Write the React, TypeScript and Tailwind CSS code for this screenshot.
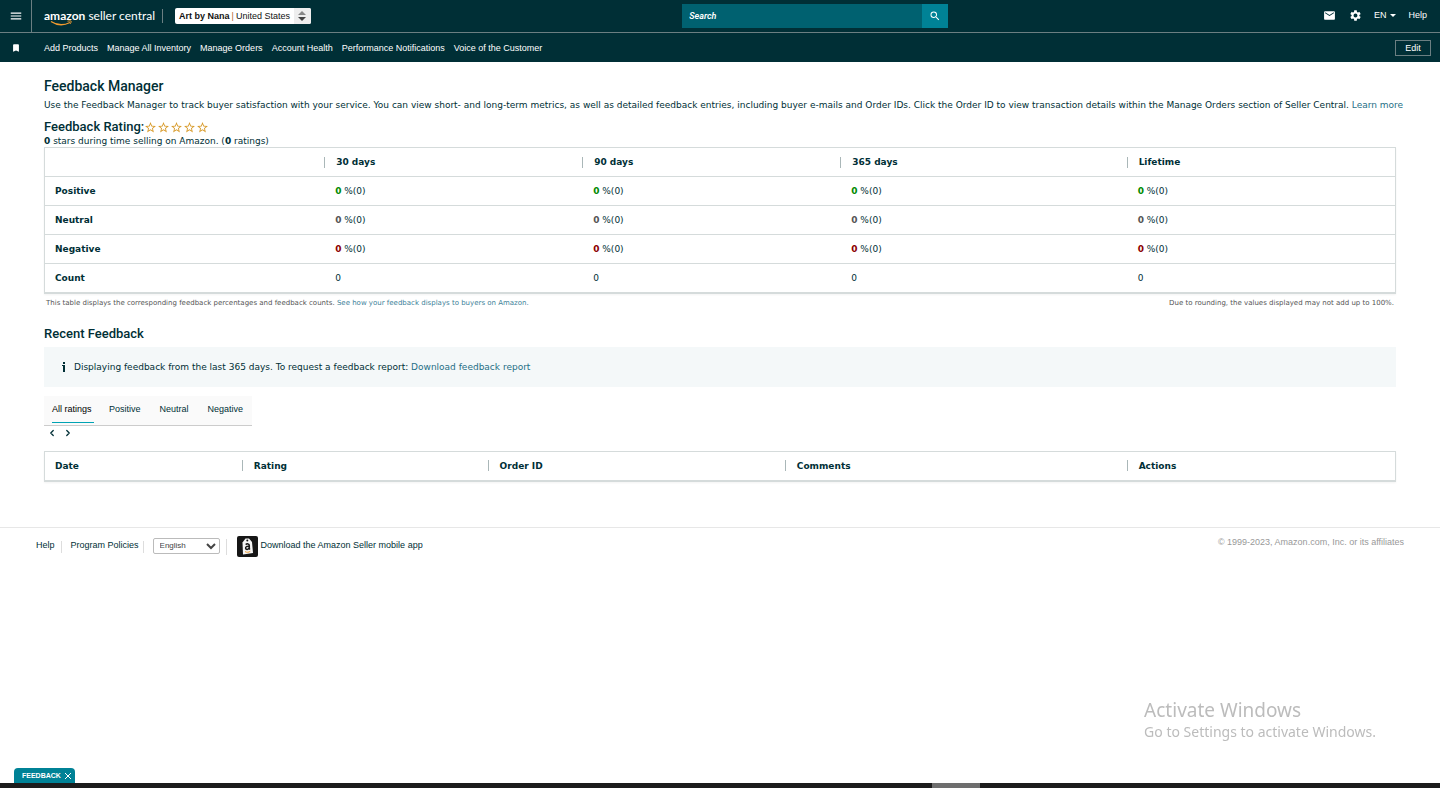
import { MdBookmark, MdMail, MdMenu, MdSearch, MdSettings, MdStarBorder } from "react-icons/md";
import { ChevronLeft, ChevronRight } from "lucide-react";

const navLinks = [
  "Add Products",
  "Manage All Inventory",
  "Manage Orders",
  "Account Health",
  "Performance Notifications",
  "Voice of the Customer",
];

const periods = [
  { label: "30 days", width: "w-[19.1%]" },
  { label: "90 days", width: "w-[19.1%]" },
  { label: "365 days", width: "w-[21.2%]" },
  { label: "Lifetime", width: "" },
];

const ratingRows = [
  { label: "Positive", color: "text-[#008a00]" },
  { label: "Neutral", color: "text-[#555555]" },
  { label: "Negative", color: "text-[#8c0000]" },
];

const entryColumns = [
  { label: "Date", width: "w-[14.6%]" },
  { label: "Rating", width: "w-[18.2%]" },
  { label: "Order ID", width: "w-[22%]" },
  { label: "Comments", width: "w-[25.3%]" },
  { label: "Actions", width: "" },
];

const tabs = ["All ratings", "Positive", "Neutral", "Negative"];

function Logo() {
  return (
    <a href="#" className="relative block whitespace-nowrap font-[Lato,sans-serif] text-xs leading-4 text-white">
      <span className="font-bold">amazon</span> <span>seller central</span>
      <svg viewBox="0 0 24 6" className="absolute top-3 left-1.5 h-1.5 w-6" fill="none" stroke="#f29b2e">
        <path d="M1 1.5C7 5.5 14 5.5 20 2.5" strokeWidth="1.3" />
        <path d="M17.5 1.2C19.5 .8 21 .8 21.2 1.2C21.4 1.8 20.8 3 20 4" strokeWidth="1" />
      </svg>
    </a>
  );
}

function TopBar() {
  return (
    <div className="flex h-8 items-center">
      <button aria-label="Menu" className="flex h-full w-8 items-center justify-center border-r border-[#6b7f82]">
        <MdMenu className="size-[14px]" />
      </button>
      <div className="flex flex-4 items-center pl-3">
        <Logo />
        <div className="ml-[7px] h-[14px] w-px bg-[#6b7f82]" />
        <button
          aria-haspopup="listbox"
          className="ml-3 flex h-4 items-center rounded-xs bg-white pl-1 text-[9px] whitespace-nowrap text-[#111111]"
        >
          <b>Art by Nana</b>
          <span className="mx-0.5 text-[#b06a30]">|</span>
          United States
          <span className="ml-1 flex h-full w-[17px] items-center justify-center rounded-r-xs bg-[#eeeeee]">
            <svg viewBox="0 0 8 10" className="h-2.5 w-2">
              <path d="M4 0L8 4H0Z" fill="#888888" />
              <path d="M4 10L8 6H0Z" fill="#444444" />
            </svg>
          </span>
        </button>
      </div>
      <form className="flex h-6 w-[266px]" onSubmit={(e) => e.preventDefault()}>
        <input
          aria-label="Search"
          placeholder="Search"
          className="min-w-0 flex-1 bg-[#006170] px-[7px] font-[Roboto,sans-serif] text-[9px] font-semibold text-white italic outline-none placeholder:text-white"
        />
        <button aria-label="Submit search" className="flex w-[26px] items-center justify-center bg-[#008296]">
          <MdSearch className="size-3" />
        </button>
      </form>
      <div className="flex flex-3 items-center justify-end pr-[13px] pb-0.5 text-[9px]">
        <button aria-label="Messages">
          <MdMail className="size-[13px]" />
        </button>
        <button aria-label="Settings" className="ml-[13px]">
          <MdSettings className="size-[13px]" />
        </button>
        <button className="ml-3 flex items-center gap-1">
          EN
          <svg viewBox="0 0 6 3" className="h-[3px] w-1.5" fill="currentColor">
            <path d="M0 0H6L3 3Z" />
          </svg>
        </button>
        <a href="#" className="ml-3">Help</a>
      </div>
    </div>
  );
}

function NavBar() {
  return (
    <div className="flex h-[30px] items-center border-t border-[#6b7f82] pr-[9px]">
      <button aria-label="Bookmarks" className="flex w-8 justify-center">
        <MdBookmark className="size-[10px]" />
      </button>
      <nav className="flex flex-1 gap-[9px] pl-3 text-[9px] whitespace-nowrap">
        {navLinks.map((link) => (
          <a key={link} href="#">{link}</a>
        ))}
      </nav>
      <button className="h-4 w-9 border border-[#6b7f82] text-[9px] leading-3">Edit</button>
    </div>
  );
}

function HeadCell({ label, width, first }: { label: string; width: string; first?: boolean }) {
  return (
    <th scope="col" className={`${width} p-0 text-left`}>
      {first ? (
        <span className="pl-[10px]">{label}</span>
      ) : (
        <span className="flex h-[11px] items-center border-l border-[#aab7b8] pl-[11px]">{label}</span>
      )}
    </th>
  );
}

function RatingTable() {
  return (
    <table className="w-full table-fixed border-collapse border border-b-2 border-[#d5dbdb] text-[9px] shadow-xs">
      <thead>
        <tr className="h-[29px]">
          <td className="w-[20.7%]" />
          {periods.map((p) => (
            <HeadCell key={p.label} label={p.label} width={p.width} />
          ))}
        </tr>
      </thead>
      <tbody>
        {ratingRows.map((row) => (
          <tr key={row.label} className="h-[29px] border-t border-[#d5dbdb]">
            <th scope="row" className="pl-[10px] text-left">{row.label}</th>
            {periods.map((p) => (
              <td key={p.label} className="pl-[11px]">
                <b className={row.color}>0</b> %(0)
              </td>
            ))}
          </tr>
        ))}
        <tr className="h-[29px] border-t border-[#d5dbdb]">
          <th scope="row" className="pl-[10px] text-left">Count</th>
          {periods.map((p) => (
            <td key={p.label} className="pl-[11px]">0</td>
          ))}
        </tr>
      </tbody>
    </table>
  );
}

function Footer() {
  return (
    <footer className="flex items-start border-t border-[#e7e7e7] px-9 pt-2 font-['Liberation_Sans',Arial,sans-serif] text-[9px]">
      <div className="flex items-center">
        <a href="#" className="pb-1">Help</a>
        <div className="mx-1.5 h-3 w-px bg-[#dddddd]" />
        <a href="#" className="ml-[3px] pb-1">Program Policies</a>
        <div className="mr-[9px] ml-1 h-3 w-px bg-[#dddddd]" />
        <select
          aria-label="Language"
          className="mb-0.5 h-4 w-[67px] rounded-xs border border-[#bbbbbb] bg-white pl-0.5 text-[8px] text-[#444444]"
        >
          <option>English</option>
        </select>
        <div className="ml-1.5 h-4 w-px bg-[#dddddd]" />
        <a href="#" className="ml-[10px] flex items-center gap-[3px]">
          <svg viewBox="0 0 21 21" className="size-[21px]">
            <rect width="21" height="21" rx="2" fill="#161616" />
            <path d="M5.5 6.5L8.5 2.5H12L15 6L16 17L6 18.5Z" fill="#f5f5f5" />
            <circle cx="10.3" cy="4.6" r="1" fill="#161616" />
            <path d="M8.7 8.6C10 7.4 12.3 7.7 12.3 9.5V12.8L13 13.5M12.2 10.2C9.8 10 8.5 10.8 8.6 12.1C8.8 13.9 11.5 13.9 12.2 11.8" fill="none" stroke="#161616" strokeWidth="1.5" />
            <path d="M8 15.6C9.7 16.6 11.7 16.5 13.3 15.3" fill="none" stroke="#f29b2e" />
          </svg>
          <span className="pb-1">Download the Amazon Seller mobile app</span>
        </a>
      </div>
      <span className="ml-auto text-[#999999]">© 1999-2023, Amazon.com, Inc. or its affiliates</span>
    </footer>
  );
}

export default function App() {
  return (
    <div className="flex min-h-screen flex-col bg-white font-['DejaVu_Sans',Verdana,sans-serif] text-[9px] leading-3 text-[#002f36]">
      <header className="bg-[#002f36] font-['Liberation_Sans',Arial,sans-serif] text-white">
        <TopBar />
        <NavBar />
      </header>

      <main className="px-11 pt-4">
        <h1 className="font-[Roboto,sans-serif] text-sm leading-4 font-medium">Feedback Manager</h1>
        <p className="mt-[5px] whitespace-nowrap">
          Use the Feedback Manager to track buyer satisfaction with your service. You can view short- and long-term
          metrics, as well as detailed feedback entries, including buyer e-mails and Order IDs. Click the Order ID to
          view transaction details within the Manage Orders section of Seller Central.{" "}
          <a href="#" className="text-[#1f6f86]">Learn more</a>
        </p>

        <div className="mt-2 flex items-center">
          <h2 className="font-[Roboto,sans-serif] text-[13px] leading-4 font-medium">Feedback Rating:</h2>
          <span className="flex text-[#d89b2b]" role="img" aria-label="0 out of 5 stars">
            {[1, 2, 3, 4, 5].map((n) => (
              <MdStarBorder key={n} className="size-[13px]" />
            ))}
          </span>
        </div>
        <p>
          <b>0</b> stars during time selling on Amazon. (<b>0</b> ratings)
        </p>
        <RatingTable />
        <div className="mt-[3px] flex justify-between px-0.5 text-[7px] text-[#555555]">
          <p>
            This table displays the corresponding feedback percentages and feedback counts.{" "}
            <a href="#" className="text-[#3d7f99]">See how your feedback displays to buyers on Amazon.</a>
          </p>
          <p>Due to rounding, the values displayed may not add up to 100%.</p>
        </div>

        <h2 className="mt-[17px] font-[Roboto,sans-serif] text-[13px] leading-4 font-medium">Recent Feedback</h2>
        <div className="mt-[5px] flex h-10 items-center bg-[#f4f8f9] pl-[18px]">
          <svg viewBox="0 0 4 10" className="mr-2 h-2.5 w-1" fill="currentColor">
            <path d="M1 0H3V2H1ZM0 3H3V10H1V4H0Z" />
          </svg>
          <p>
            Displaying feedback from the last 365 days. To request a feedback report:{" "}
            <a href="#" className="text-[#1f6f86]">Download feedback report</a>
          </p>
        </div>

        <div
          role="tablist"
          className="mt-[9px] flex h-[30px] w-52 gap-[11px] border-b border-[#cccccc] bg-[#fafafa] pl-2 font-['Liberation_Sans',Arial,sans-serif] whitespace-nowrap"
        >
          {tabs.map((tab, i) => (
            <button
              key={tab}
              role="tab"
              aria-selected={i === 0}
              className={
                i === 0
                  ? "h-[27px] w-[42px] shrink-0 border-b border-[#00a3b4] text-left text-black"
                  : "h-[27px] px-1"
              }
            >
              {tab}
            </button>
          ))}
        </div>
        <div className="mt-0.5 flex gap-1.5 pl-[3px]">
          <button aria-label="Previous page">
            <ChevronLeft className="size-[10px]" strokeWidth={3} />
          </button>
          <button aria-label="Next page">
            <ChevronRight className="size-[10px]" strokeWidth={3} />
          </button>
        </div>

        <table className="mt-[13px] w-full table-fixed border-collapse border border-b-2 border-[#d5dbdb] text-[9px] shadow-xs">
          <thead>
            <tr className="h-[30px]">
              {entryColumns.map((c, i) => (
                <HeadCell key={c.label} label={c.label} width={c.width} first={i === 0} />
              ))}
            </tr>
          </thead>
        </table>
      </main>

      <div className="mt-[45px]">
        <Footer />
      </div>

      <div className="mt-auto pl-[14px]">
        <button className="flex h-[15px] items-center gap-1 rounded-t-sm bg-[#008296] pr-1 pl-2 font-['Liberation_Sans',Arial,sans-serif] text-[7px] font-bold text-white">
          FEEDBACK
          <svg viewBox="0 0 6 6" className="size-1.5" stroke="currentColor">
            <path d="M0 0L6 6M6 0L0 6" />
          </svg>
        </button>
      </div>
      <div className="flex h-[5px] justify-center bg-[#1c1c1c]">
        <div className="ml-[472px] w-12 bg-[#6e6e6e]" />
      </div>

      <div className="pointer-events-none fixed right-[64px] bottom-[46px] font-['Noto_Sans',sans-serif] text-[#bcbcbc]">
        <p className="text-[19px] leading-6">Activate Windows</p>
        <p className="text-sm leading-5">Go to Settings to activate Windows.</p>
      </div>
    </div>
  );
}
